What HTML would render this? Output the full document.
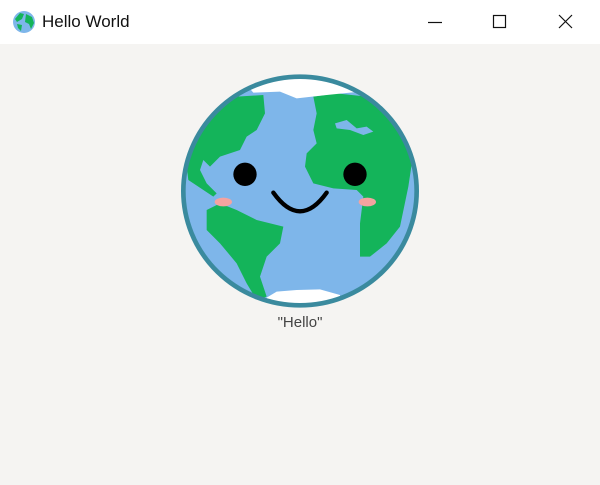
<!DOCTYPE html>
<html><head><style>
html,body{margin:0;padding:0;width:600px;height:485px;overflow:hidden;background:#f5f4f2;font-family:"Liberation Sans",sans-serif;}
#tb{position:absolute;left:0;top:0;width:600px;height:44px;background:#fff;}
#title{position:absolute;left:42px;top:12px;font-size:17px;color:#111;}
#hello{position:absolute;left:0;width:600px;top:314px;text-align:center;font-size:15px;color:#444;}
svg{position:absolute;}
</style></head><body>
<div id="tb">
<svg style="left:12px;top:10px" width="24" height="24" viewBox="0 0 24 24"><circle cx="12" cy="12" r="11" fill="#7eb6ea"/><path d="M3,9 L8,3 L12,4 L10,9 L5,12 Z M5,14 L10,15 L9,21 L6,18 Z M14,4 L20,7 L22,13 L19,19 L17,14 L13,12 Z" fill="#14b45a"/></svg>
<div id="title">Hello World</div>
<svg style="left:420px;top:10px" width="160" height="24" viewBox="0 0 160 24"><line x1="8" y1="12.5" x2="22" y2="12.5" stroke="#111" stroke-width="1.2"/><rect x="73.5" y="5.5" width="12" height="12" fill="none" stroke="#111" stroke-width="1.2"/><path d="M139,5 L152,18 M152,5 L139,18" stroke="#111" stroke-width="1.2"/></svg>
</div>
<svg style="left:170px;top:70px" width="260" height="270" viewBox="0 0 780 810">
<defs><clipPath id="c"><ellipse cx="390" cy="363" rx="350" ry="343"/></clipPath></defs>
<ellipse cx="390" cy="363" rx="350" ry="343" fill="#7eb6ea"/>
<g clip-path="url(#c)">
<path d="M55,330 L45,250 L70,170 L120,110 L200,80 L280,75 L285,130 L260,180 L230,200 L210,240 L150,260 L120,290 L100,270 L90,300 L110,340 L140,370 L130,380 Z" fill="#14b45a"/>
<path d="M110,420 L150,400 L200,420 L260,450 L340,470 L330,520 L290,560 L270,620 L290,680 L260,690 L230,640 L200,580 L150,520 L110,480 Z" fill="#14b45a"/>
<path d="M430,80 L500,70 L590,80 L650,110 L710,170 L730,250 L715,350 L690,470 L650,520 L600,560 L570,560 L570,460 L580,380 L560,360 L490,355 L430,340 L405,290 L410,250 L440,220 L430,180 L440,130 Z" fill="#14b45a"/>
<path d="M495,160 L530,150 L560,175 L590,170 L610,185 L580,195 L540,180 L500,175 Z" fill="#7eb6ea"/>
<path d="M200,10 L590,10 L570,65 L470,75 L380,85 L330,65 L250,68 Z" fill="#fff"/>
<path d="M270,695 L320,665 L380,660 L450,658 L510,675 L510,730 L270,730 Z" fill="#fff"/>
</g>
<ellipse cx="390" cy="363" rx="350" ry="343" fill="none" stroke="#3a8a9e" stroke-width="14"/>
<circle cx="225" cy="313" r="35" fill="#000"/>
<circle cx="555" cy="313" r="35" fill="#000"/>
<path d="M310,368 Q390,480 470,368" fill="none" stroke="#000" stroke-width="13" stroke-linecap="round"/>
<ellipse cx="160" cy="396" rx="26" ry="13" fill="#f4a3a0"/>
<ellipse cx="592" cy="396" rx="26" ry="13" fill="#f4a3a0"/>
</svg>
<div id="hello">"Hello"</div>
</body></html>
